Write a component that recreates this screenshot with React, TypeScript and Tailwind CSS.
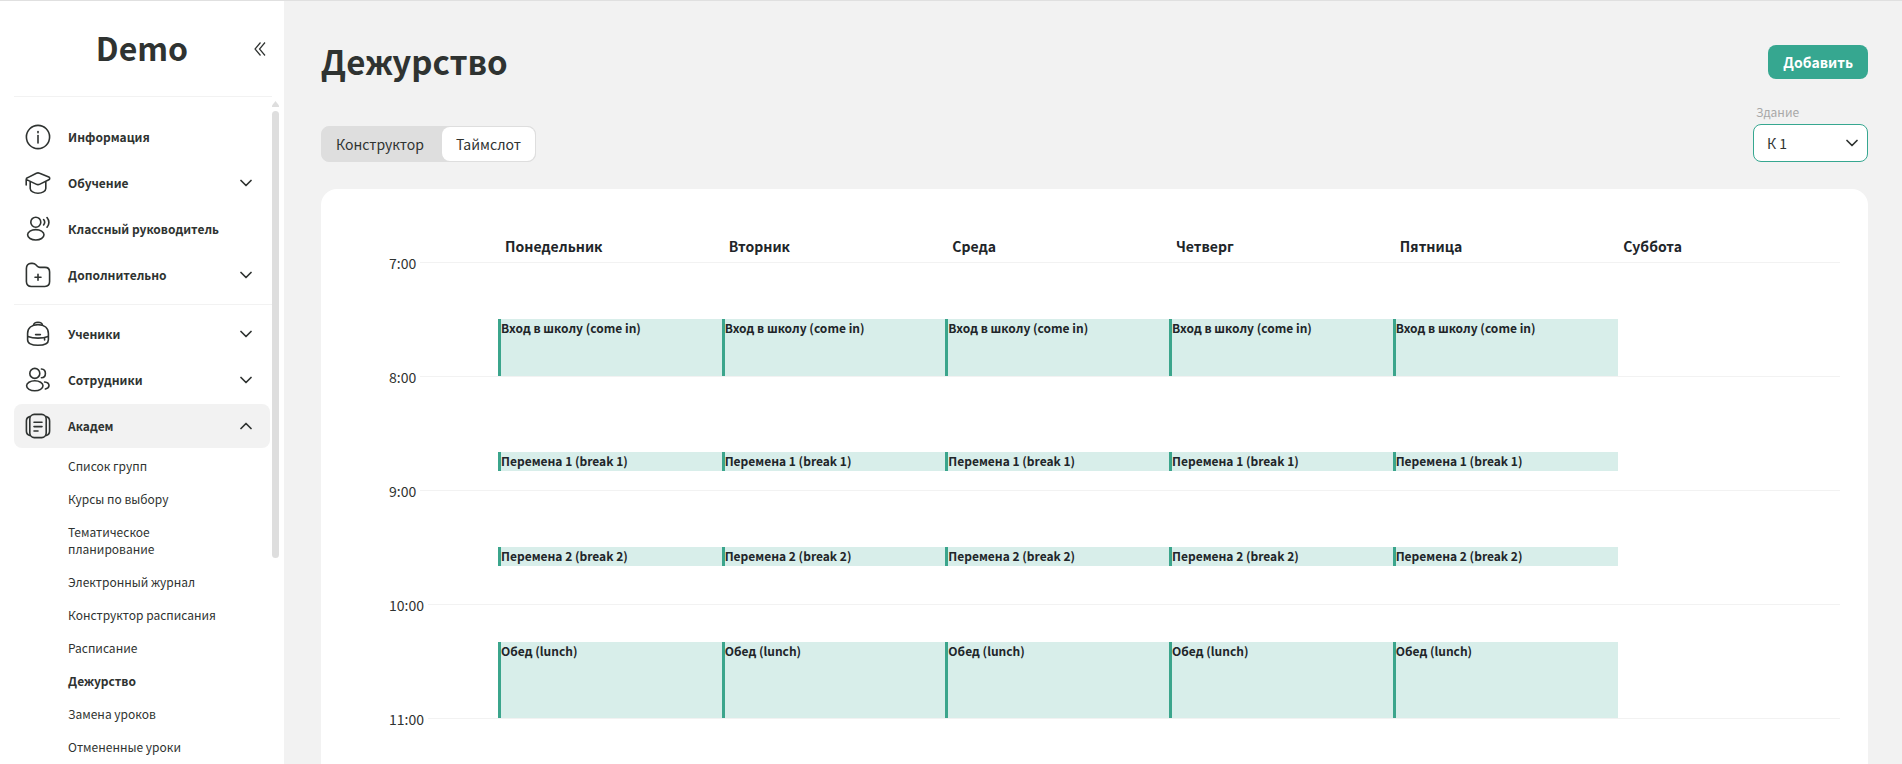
import { useState, type ReactNode } from 'react';
import clsx from 'clsx';

type NavItem = {
  label: string;
  icon: ReactNode;
  expandable?: boolean;
  open?: boolean;
};

const topNav: NavItem[] = [
  {
    label: 'Информация',
    icon: (
      <>
        <circle cx="13" cy="13" r="11.6" />
        <path d="M13 11.5v7.5" />
        <path d="M13 7.6v1.2" />
      </>
    ),
  },
  {
    label: 'Обучение',
    expandable: true,
    icon: (
      <>
        <path d="M1.2 15V9.600c0-1 .6-1.600 1.600-2L11.400 3.200a3.800 3.800 0 0 1 3.200 0L23.800 7c1.200.6 1.200 2.200 0 2.800l-8.800 4.300a4.500 4.500 0 0 1-4 0L1.600 9.600" />
        <path d="M5.200 12v6.500c0 2.600 3.800 4.700 7.800 4.700s7.800-2.100 7.800-4.700V12" />
      </>
    ),
  },
  {
    label: 'Классный руководитель',
    icon: (
      <>
        <circle cx="10.8" cy="6.2" r="5" />
        <ellipse cx="10.8" cy="18.8" rx="8.2" ry="5.2" />
        <path d="M18.6 3.6c1.3 1.6 1.3 3.8 0 5.4M22 1.6c2.3 2.9 2.3 6.700 0 9.600" />
      </>
    ),
  },
  {
    label: 'Дополнительно',
    expandable: true,
    icon: (
      <>
        <path d="M1.400 6.500c0-3 1.800-5.100 4.600-5.100h1.400c1.500 0 2.700.5 3.700 1.600l1.200 1.300c.7.800 1.500 1.100 2.600 1.100h5c3 0 4.700 1.800 4.700 4.600v9.600c0 3-1.800 4.900-4.700 4.900H6.200c-3 0-4.800-1.900-4.800-4.900z" />
        <path d="M13 12.200v6M10 15.200h6" />
      </>
    ),
  },
];

const schoolNav: NavItem[] = [
  {
    label: 'Ученики',
    expandable: true,
    icon: (
      <>
        <path d="M2.600 12.500C2.600 7 6.500 3.600 13 3.600S23.400 7 23.400 12.500v6.200c0 3.600-3.600 5.600-10.400 5.600S2.600 22.300 2.600 18.700z" />
        <path d="M8.600 4.200c.2-2 1.800-3 4.400-3s4.200 1 4.400 3" />
        <path d="M2.800 15.400c5.800 2.300 14.600 2.300 20.400 0M10.600 13.600h4.800M19.600 17v2" />
      </>
    ),
  },
  {
    label: 'Сотрудники',
    expandable: true,
    icon: (
      <>
        <circle cx="9.800" cy="6.400" r="5" />
        <ellipse cx="9.800" cy="18.800" rx="8.200" ry="5" />
        <path d="M16.400 2c2.400.2 4 2 4 4.400s-1.600 4.200-4 4.400M19.600 15c2.600.3 4.400 1.700 4.400 3.500s-1.400 2.900-3.600 3.500" />
      </>
    ),
  },
  {
    label: 'Академ',
    expandable: true,
    open: true,
    icon: (
      <>
        <rect x="4.800" y="1.400" width="16.400" height="23.200" rx="4.500" />
        <path d="M4.800 3.600C2.400 4.200 1.400 5.800 1.400 8v10c0 2.200 1 3.800 3.400 4.400M21.200 3.600c2.400.6 3.400 2.200 3.400 4.400v10c0 2.200-1 3.800-3.400 4.400" />
        <path d="M9 9.200h8M9 13.600h8M9 18h4" />
      </>
    ),
  },
];

const academLinks = [
  'Список групп',
  'Курсы по выбору',
  'Тематическое планирование',
  'Электронный журнал',
  'Конструктор расписания',
  'Расписание',
  'Дежурство',
  'Замена уроков',
  'Отмененные уроки',
];

const days = ['Понедельник', 'Вторник', 'Среда', 'Четверг', 'Пятница', 'Суббота'];
const hours = [7, 8, 9, 10, 11];

const HOUR_HEIGHT = 114;
const DAY_START = 7 * 60;

// start and end are minutes from midnight
const slots = [
  { title: 'Вход в школу (come in)', start: 450, end: 480 },
  { title: 'Перемена 1 (break 1)', start: 520, end: 530 },
  { title: 'Перемена 2 (break 2)', start: 570, end: 580 },
  { title: 'Обед (lunch)', start: 620, end: 660 },
];

const toPx = (minutes: number) => Math.round((minutes * HOUR_HEIGHT) / 60);

function Chevron({ up = false }: { up?: boolean }) {
  return (
    <svg
      viewBox="0 0 12 8"
      className={clsx('h-2 w-3 shrink-0', up && 'rotate-180')}
      fill="none"
      stroke="currentColor"
      strokeWidth="1.7"
      strokeLinecap="round"
      strokeLinejoin="round"
      aria-hidden="true"
    >
      <path d="M1 1.500 6 6.500l5-5" />
    </svg>
  );
}

function NavButton({ item }: { item: NavItem }) {
  return (
    <button
      type="button"
      aria-expanded={item.expandable ? Boolean(item.open) : undefined}
      className={clsx(
        'flex h-11 w-full items-center rounded-lg pr-[18px] pl-[11px] text-left text-[12px] font-bold',
        item.open && 'bg-[#f2f2f2]',
      )}
    >
      <svg
        viewBox="0 0 26 26"
        className="mr-[17px] size-[26px] shrink-0"
        fill="none"
        stroke="currentColor"
        strokeWidth="1.6"
        strokeLinecap="round"
        strokeLinejoin="round"
        aria-hidden="true"
      >
        {item.icon}
      </svg>
      <span className="flex-1">{item.label}</span>
      {item.expandable && <Chevron up={item.open} />}
    </button>
  );
}

function Sidebar() {
  return (
    <aside className="flex w-[284px] shrink-0 flex-col bg-white pl-3.5">
      <div className="mr-3 flex h-24 shrink-0 items-center border-b border-[#f2f2f2] pr-1.5">
        <span className="flex-1 pb-1 pl-4 text-center text-[32px] font-bold">Demo</span>
        <button type="button" aria-label="Свернуть меню">
          <svg viewBox="0 0 12 14" className="h-3.5 w-3" fill="none" stroke="currentColor" strokeWidth="1.2">
            <path d="M6.500.5 1 7l5.500 6.500M11 .5 5.500 7l5.500 6.500" />
          </svg>
        </button>
      </div>

      <div className="flex min-h-0 flex-1">
        <nav className="min-w-0 flex-1 overflow-hidden pt-[18px]">
          <div className="flex flex-col gap-0.5 pr-0.5">
            {topNav.map((item) => (
              <NavButton key={item.label} item={item} />
            ))}
          </div>
          <hr className="my-[7px] border-[#f2f2f2]" />
          <div className="flex flex-col gap-0.5 pr-0.5">
            {schoolNav.map((item) => (
              <NavButton key={item.label} item={item} />
            ))}
          </div>
          <ul className="w-[210px] pt-px pl-[54px] text-[12px] leading-[17px]">
            {academLinks.map((link) => (
              <li key={link}>
                <a href="#" className={clsx('block py-2', link === 'Дежурство' && 'font-bold')}>
                  {link}
                </a>
              </li>
            ))}
          </ul>
        </nav>
        <div className="mr-[5px] flex w-[7px] flex-col pt-1" aria-hidden="true">
          <svg viewBox="0 0 7 6" className="h-1.5 w-[7px] fill-[#dedede]">
            <path d="M3.500 0 7 4.500V6H0V4.500z" />
          </svg>
          <div className="mt-1 h-[447px] rounded-full bg-[#dedede]" />
        </div>
      </div>
    </aside>
  );
}

function Schedule() {
  return (
    <section className="mt-[27px] rounded-2xl bg-white pt-[46px] pr-7 pl-[68px]">
      <div className="grid grid-cols-6 pl-[109px] text-[14px] leading-[22px] font-bold text-[#212529]">
        {days.map((day) => (
          <div key={day} className="pl-[7px]">
            {day}
          </div>
        ))}
      </div>

      <div className="relative pt-[5px]">
        {hours.map((hour) => (
          <div key={hour} className="flex h-[114px] gap-1">
            <span className="-mt-[11px] text-[14px] leading-6">{hour}:00</span>
            <div className="flex-1 border-t border-[#f2f2f2]" />
          </div>
        ))}

        <div className="absolute inset-x-0 top-[5px] grid grid-cols-6 pl-[109px]">
          {days.map((day) => (
            <div key={day} className="relative">
              {day !== 'Суббота' &&
                slots.map((slot) => (
                  <div
                    key={slot.title}
                    className="absolute left-0 -right-[2px] border-l-[3px] border-[#3ba58c] bg-[#d8eeea] text-[12px] leading-[18px] font-bold text-[#212529]"
                    style={{ top: toPx(slot.start - DAY_START), height: toPx(slot.end - slot.start) }}
                  >
                    {slot.title}
                  </div>
                ))}
            </div>
          ))}
        </div>
      </div>
    </section>
  );
}

export default function App() {
  const [view, setView] = useState('Конструктор');
  const [building, setBuilding] = useState('К 1');

  return (
    <div className="flex h-screen overflow-hidden border-t border-[#e0e0e0] bg-[#f2f2f2] font-['Noto_Sans_CJK_SC',sans-serif] text-[#2f3331]">
      <Sidebar />
      <main className="min-w-0 flex-1 pt-11 pr-[34px] pl-[37px]">
        <div className="flex items-start justify-between">
          <h1 className="text-[33px] leading-8 font-bold">Дежурство</h1>
          <button type="button" className="h-[34px] rounded-lg bg-[#36a790] px-[15px] text-[14px] font-bold text-white">
            Добавить
          </button>
        </div>

        <div className="mt-6 flex items-end justify-between">
          <div className="flex h-9 rounded-lg border border-[#dedede] bg-[#dedede] text-[14px]">
            {['Конструктор', 'Таймслот'].map((name) => (
              <button
                key={name}
                type="button"
                aria-pressed={view === name}
                onClick={() => setView(name)}
                className={clsx('rounded-lg', view === name ? 'pr-[18px] pl-3.5' : 'bg-white px-3.5')}
              >
                {name}
              </button>
            ))}
          </div>

          <div className="flex w-[115px] flex-col">
            <label htmlFor="building" className="pl-[3px] text-[12px] leading-[18px] text-[#a8a8a8]">
              Здание
            </label>
            <div className="relative mt-[3px]">
              <select
                id="building"
                value={building}
                onChange={(e) => setBuilding(e.target.value)}
                className="h-[38px] w-full appearance-none rounded-lg border border-[#36a790] bg-white px-[13px] text-[14px]"
              >
                <option>К 1</option>
                <option>К 2</option>
              </select>
              <span className="pointer-events-none absolute inset-y-0 right-2.5 flex items-center">
                <Chevron />
              </span>
            </div>
          </div>
        </div>

        <Schedule />
      </main>
    </div>
  );
}
